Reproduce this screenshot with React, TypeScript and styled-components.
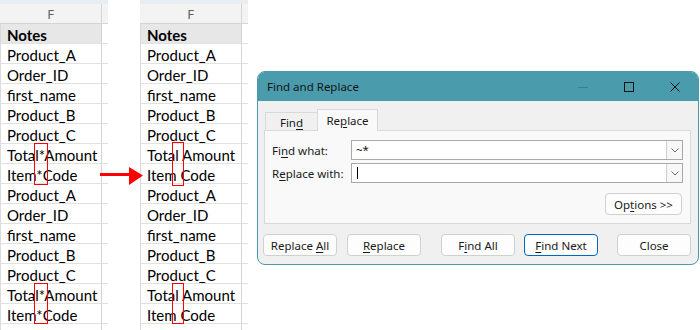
import React from "react";
import styled, { createGlobalStyle } from "styled-components";

const Global = createGlobalStyle`
  html, body { margin: 0; padding: 0; background: #ffffff; }
  body { width: 700px; height: 330px; overflow: hidden; }
  * { box-sizing: border-box; }
`;

const Page = styled.div`
  position: relative;
  width: 700px;
  height: 330px;
  overflow: hidden;
  display: flex;
  align-items: flex-start;
  background: #ffffff;
`;

/* ---------- spreadsheet ---------- */

const Sheet = styled.div<{ $ml: number }>`
  position: relative;
  flex-shrink: 0;
  width: 108px;
  margin-left: ${(p) => p.$ml}px;
  display: flex;
  flex-direction: column;
  font-family: Lato, "Liberation Sans", sans-serif;
`;

const TopStrip = styled.div`
  height: 4px;
  background: #e8edf2;
`;

const Row = styled.div`
  display: grid;
  grid-template-columns: 102px 6px;
  height: 20px;
`;

const HeadCell = styled.div<{ $main?: boolean }>`
  height: 20px;
  background: #f3f3f3;
  border-bottom: 1px solid #d4d4d4;
  border-right: ${(p) => (p.$main ? "1px solid #d4d4d4" : "none")};
  color: #5e5e5e;
  font-family: "Noto Sans", sans-serif;
  font-size: 13px;
  line-height: 20px;
  text-align: center;
`;

const Cell = styled.div<{ $main?: boolean; $title?: boolean }>`
  height: 20px;
  padding-left: 6px;
  border-bottom: 1px solid #e1e1e1;
  border-left: ${(p) => (p.$main ? "1px solid #dadada" : "none")};
  border-right: ${(p) => (p.$main ? "1px solid #d4d4d4" : "none")};
  background: ${(p) => (p.$title && p.$main ? "#e7e7e7" : "#ffffff")};
  color: #000000;
  font-size: 15px;
  font-weight: ${(p) => (p.$title ? 700 : 400)};
  line-height: 22px;
  white-space: nowrap;
  overflow: hidden;
`;

const Mark = styled.div<{ $x: number; $y: number; $w: number; $h: number }>`
  position: absolute;
  left: ${(p) => p.$x}px;
  top: ${(p) => p.$y}px;
  width: ${(p) => p.$w}px;
  height: ${(p) => p.$h}px;
  border: 1px solid #ff0000;
`;

const Arrow = styled.svg`
  position: absolute;
  left: 100px;
  top: 166px;
`;

/* ---------- dialog ---------- */

const Dialog = styled.div`
  flex-shrink: 0;
  margin-left: 9px;
  margin-top: 71px;
  width: 442px;
  height: 194px;
  border: 1px solid #4a9bab;
  border-radius: 8px;
  overflow: hidden;
  background: #f0f0f0;
  display: flex;
  flex-direction: column;
  font-family: "Noto Sans", sans-serif;
  font-size: 11.5px;
  color: #1a1a1a;
`;

const TitleBar = styled.div`
  height: 29px;
  background: #4a9bab;
  display: flex;
  align-items: center;
  padding-left: 9px;
`;

const Title = styled.div`
  flex: 1;
  font-size: 11.5px;
  color: #151515;
`;

const Ctrl = styled.div`
  width: 46px;
  height: 29px;
  display: flex;
  align-items: center;
  justify-content: center;
`;

const Body = styled.div`
  flex: 1;
  padding: 8px 7px 8px 6px;
  display: flex;
  flex-direction: column;
`;

const TabRow = styled.div`
  height: 21px;
  display: flex;
  align-items: flex-end;
  padding-left: 1px;
`;

const Tab = styled.div<{ $active?: boolean; $w: number }>`
  position: relative;
  z-index: ${(p) => (p.$active ? 1 : 0)};
  width: ${(p) => p.$w}px;
  height: ${(p) => (p.$active ? 22 : 18)}px;
  margin-bottom: ${(p) => (p.$active ? -1 : 0)}px;
  margin-left: ${(p) => (p.$active ? -1 : 0)}px;
  background: ${(p) => (p.$active ? "#f9f9f9" : "#f0f0f0")};
  border: 1px solid #d9d9d9;
  border-bottom: none;
  display: flex;
  align-items: center;
  justify-content: center;
  padding-top: ${(p) => (p.$active ? 0 : 1)}px;
`;

const Panel = styled.div`
  height: 94px;
  background: #f9f9f9;
  border: 1px solid #d9d9d9;
  padding: 9px 7px 0 7px;
  display: flex;
  flex-direction: column;
  gap: 3px;
`;

const Field = styled.div`
  display: grid;
  grid-template-columns: 79px 1fr;
  align-items: center;
  height: 20px;
`;

const Combo = styled.div`
  height: 20px;
  display: flex;
  background: #ffffff;
  border: 1px solid #a9a9a9;
`;

const ComboText = styled.div`
  flex: 1;
  padding-left: 4px;
  display: flex;
  align-items: center;
  line-height: 18px;
`;

const Caret = styled.span`
  display: inline-block;
  width: 1px;
  height: 12px;
  margin-left: 1px;
  background: #000000;
`;

const DropBtn = styled.div`
  width: 16px;
  border-left: 1px solid #cfcfcf;
  background: #f7f7f7;
  display: flex;
  align-items: center;
  justify-content: center;
`;

const OptionsRow = styled.div`
  display: flex;
  justify-content: flex-end;
  margin-top: 7px;
  padding-right: 1px;
`;

const Button = styled.div<{ $primary?: boolean; $ml?: number }>`
  width: 74px;
  height: 22px;
  margin-left: ${(p) => p.$ml ?? 0}px;
  border: 1px solid ${(p) => (p.$primary ? "#0067c0" : "#d0d0d0")};
  border-radius: 4px;
  background: #fdfdfd;
  display: flex;
  align-items: center;
  justify-content: center;
  color: #1a1a1a;
  white-space: nowrap;
`;

const OptBtn = styled(Button)`
  width: 77px;
  height: 22px;
`;

const ButtonRow = styled.div`
  display: flex;
  margin-top: 10px;
  margin-left: -1px;
`;

const U = styled.span`
  text-decoration: underline;
  text-underline-offset: 2px;
  text-decoration-thickness: 1px;
`;

const leftRows = [
  "Product_A",
  "Order_ID",
  "first_name",
  "Product_B",
  "Product_C",
  "Total*Amount",
  "Item*Code",
];

function SheetView({
  ml,
  items,
  marks,
}: {
  ml: number;
  items: string[];
  marks: { x: number; y: number; w: number; h: number }[];
}) {
  const all = [...items, ...items, ""];
  return (
    <Sheet $ml={ml}>
      <TopStrip />
      <Row>
        <HeadCell $main>F</HeadCell>
        <HeadCell />
      </Row>
      <Row>
        <Cell $main $title>
          Notes
        </Cell>
        <Cell $title />
      </Row>
      {all.map((t, i) => (
        <Row key={i}>
          <Cell $main>{t}</Cell>
          <Cell />
        </Row>
      ))}
      {marks.map((m, i) => (
        <Mark key={i} $x={m.x} $y={m.y} $w={m.w} $h={m.h} />
      ))}
    </Sheet>
  );
}

export default function App() {
  const rightRows = leftRows.map((r) => r.replace("*", " "));
  return (
    <>
      <Global />
      <Page>
        <SheetView
          ml={0}
          items={leftRows}
          marks={[
            { x: 34, y: 143, w: 14, h: 42 },
            { x: 34, y: 283, w: 14, h: 41 },
          ]}
        />
        <SheetView
          ml={32}
          items={rightRows}
          marks={[
            { x: 32, y: 142, w: 12, h: 44 },
            { x: 32, y: 283, w: 12, h: 41 },
          ]}
        />
        <Dialog>
          <TitleBar>
            <Title>Find and Replace</Title>
            <Ctrl>
              <svg width="10" height="10" viewBox="0 0 10 10">
                <line x1="0" y1="5.5" x2="10" y2="5.5" stroke="#3f7e8a" strokeWidth="1" />
              </svg>
            </Ctrl>
            <Ctrl>
              <svg width="10" height="10" viewBox="0 0 10 10">
                <rect x="0.5" y="0.5" width="9" height="9" fill="none" stroke="#111" strokeWidth="1" />
              </svg>
            </Ctrl>
            <Ctrl>
              <svg width="10" height="10" viewBox="0 0 10 10">
                <path d="M0.5 0.5 L9.5 9.5 M9.5 0.5 L0.5 9.5" stroke="#111" strokeWidth="1" />
              </svg>
            </Ctrl>
          </TitleBar>
          <Body>
            <TabRow>
              <Tab $w={53}>
                <span>
                  Fin<U>d</U>
                </span>
              </Tab>
              <Tab $active $w={61}>
                <span>
                  Re<U>p</U>lace
                </span>
              </Tab>
            </TabRow>
            <Panel>
              <Field>
                <span>
                  Fi<U>n</U>d what:
                </span>
                <Combo>
                  <ComboText>~*</ComboText>
                  <DropBtn>
                    <svg width="8" height="5" viewBox="0 0 8 5">
                      <path d="M0.5 0.5 L4 4 L7.5 0.5" fill="none" stroke="#6a6a6a" strokeWidth="1" />
                    </svg>
                  </DropBtn>
                </Combo>
              </Field>
              <Field>
                <span>
                  R<U>e</U>place with:
                </span>
                <Combo>
                  <ComboText>
                    <Caret />
                  </ComboText>
                  <DropBtn>
                    <svg width="8" height="5" viewBox="0 0 8 5">
                      <path d="M0.5 0.5 L4 4 L7.5 0.5" fill="none" stroke="#6a6a6a" strokeWidth="1" />
                    </svg>
                  </DropBtn>
                </Combo>
              </Field>
              <OptionsRow>
                <OptBtn>
                  <span>
                    Op<U>t</U>ions &gt;&gt;
                  </span>
                </OptBtn>
              </OptionsRow>
            </Panel>
            <ButtonRow>
              <Button>
                <span>
                  Replace <U>A</U>ll
                </span>
              </Button>
              <Button $ml={10}>
                <span>
                  <U>R</U>eplace
                </span>
              </Button>
              <Button $ml={20}>
                <span>
                  F<U>i</U>nd All
                </span>
              </Button>
              <Button $ml={9} $primary>
                <span>
                  <U>F</U>ind Next
                </span>
              </Button>
              <Button $ml={19}>
                <span>Close</span>
              </Button>
            </ButtonRow>
          </Body>
        </Dialog>
        <Arrow width="44" height="20" viewBox="0 0 44 20">
          <rect x="0" y="7" width="31" height="3" fill="#ff0000" />
          <polygon points="29,1 43,9.5 29,19" fill="#ff0000" />
        </Arrow>
      </Page>
    </>
  );
}
